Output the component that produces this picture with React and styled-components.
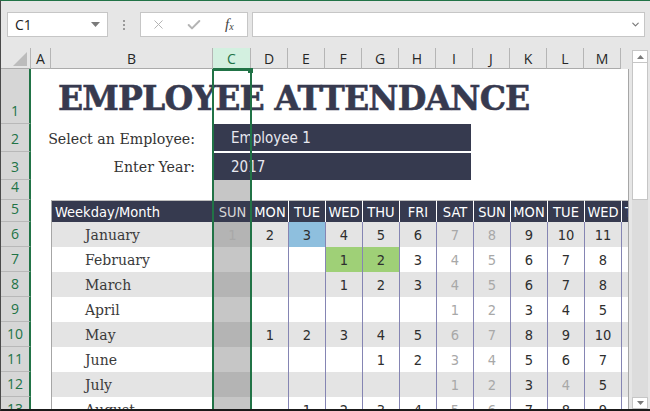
import React from "react";
import styled, { createGlobalStyle } from "styled-components";
import { X, Check, ChevronDown } from "lucide-react";

const GlobalStyle = createGlobalStyle`
  html, body { margin: 0; padding: 0; background: #fff; }
  * { box-sizing: border-box; }
`;

const NAVY = "#363a4f";
const STRIPE = "#e4e4e4";
const LINE = "#8585b3";
const GREEN = "#217346";
const UI = `"Open Sans", "Liberation Sans", sans-serif`;
const SANS = `"DejaVu Sans Condensed", "Liberation Sans", sans-serif`;
const SERIF = `"DejaVu Serif", "Liberation Serif", serif`;

const Window = styled.div`
  width: 650px;
  height: 411px;
  background: #e6e6e6;
  border-top: 1px solid ${GREEN};
  border-left: 1px solid #4a4a4a;
  border-bottom: 2px solid #1a1a1a;
  display: flex;
  flex-direction: column;
  overflow: hidden;
  font-family: ${UI};
`;

/* formula bar */
const FormulaBar = styled.div`
  height: 47px;
  flex-shrink: 0;
  display: flex;
  align-items: flex-start;
  padding: 11px 5px 0 6px;
`;

const Box = styled.div`
  height: 25px;
  background: #fff;
  border: 1px solid #c6c6c6;
  display: flex;
  align-items: center;
`;

const NameBox = styled(Box)`
  width: 101px;
  justify-content: space-between;
  padding: 0 7px 0 7px;
  font-size: 14px;
  color: #222;
`;

const Dots = styled.div`
  width: 32px;
  height: 25px;
  display: flex;
  flex-direction: column;
  align-items: center;
  justify-content: center;
  gap: 2px;
  & span {
    width: 2px;
    height: 2px;
    background: #9a9a9a;
  }
`;

const ButtonBox = styled(Box)`
  width: 108px;
`;

const Slot = styled.div`
  width: 36px;
  display: flex;
  justify-content: center;
  align-items: center;
  color: #b4b4b4;
`;

const Fx = styled.span`
  font-family: "Liberation Serif", serif;
  font-style: italic;
  font-size: 15px;
  color: #444;
  & sub {
    font-size: 10px;
    vertical-align: baseline;
    position: relative;
    top: 1px;
  }
`;

const FormulaInput = styled(Box)`
  flex: 1;
  margin-left: 4px;
  justify-content: flex-end;
  padding-right: 3px;
  color: #777;
`;

/* sheet */
const SheetArea = styled.div`
  flex: 1;
  min-height: 0;
  display: flex;
`;

const Grid = styled.div`
  width: 628px;
  position: relative;
  display: flex;
  flex-direction: column;
  overflow: hidden;
`;

const HeaderRow = styled.div`
  height: 21px;
  flex-shrink: 0;
  display: flex;
`;

const Corner = styled.div`
  width: 30px;
  flex-shrink: 0;
  position: relative;
  border-right: 1px solid #b5b5b5;
  border-bottom: 1px solid #ababab;
  & svg {
    position: absolute;
    right: 3px;
    bottom: 2px;
  }
`;

const ColHead = styled.div`
  width: ${p => p.$w}px;
  flex-shrink: 0;
  display: flex;
  align-items: center;
  justify-content: center;
  font-size: 14px;
  color: ${p => (p.$sel ? GREEN : "#262626")};
  background: ${p => (p.$sel ? "#d3f0e0" : "transparent")};
  border-right: 1px solid #b5b5b5;
  border-bottom: 1px solid ${p => (p.$sel ? GREEN : "#ababab")};
`;

const Body = styled.div`
  flex: 1;
  background: #fff;
  border-right: 1px solid #a6a6a6;
`;

const Row = styled.div`
  height: ${p => p.$h}px;
  display: flex;
`;

const RowHead = styled.div`
  width: 30px;
  flex-shrink: 0;
  background: #d6d6d6;
  color: ${GREEN};
  border-right: 2px solid ${GREEN};
  border-bottom: 1px solid #b8b8b8;
  display: flex;
  align-items: flex-end;
  justify-content: center;
  font-size: 14px;
  line-height: 20px;
  padding-bottom: 2px;
`;

const Cell = styled.div`
  flex: 0 0 ${p => p.$w}px;
  width: ${p => p.$w}px;
  height: 100%;
  display: flex;
  align-items: center;
  justify-content: ${p => p.$align || "center"};
  background: ${p => p.$bg || "#fff"};
  overflow: hidden;
  white-space: nowrap;
`;

const Filler = styled.div`
  flex: 1;
  height: 100%;
  background: ${p => p.$bg || "#fff"};
`;

const TitleCell = styled.div`
  flex: 1;
  display: flex;
  align-items: flex-end;
  padding: 0 0 8px 7px;
  font-family: ${SERIF};
  font-weight: bold;
  font-size: 33px;
  line-height: 34px;
  letter-spacing: -0.8px;
  color: #373a4f;
  -webkit-text-stroke: 0.6px #373a4f;
  white-space: nowrap;
`;

const LabelCell = styled(Cell)`
  align-items: flex-end;
  justify-content: flex-end;
  overflow: visible;
  padding: 0 18px 3px 0;
  font-family: ${SERIF};
  font-size: 14.2px;
  line-height: 20px;
  color: #333;
`;

const InputCell = styled(Cell)`
  padding: ${p => (p.$first ? "0 2px 1px 0" : "1px 2px 0 0")};
  align-items: stretch;
`;

const InputBox = styled.div`
  flex: 1;
  background: ${NAVY};
  color: #e8e8f0;
  display: flex;
  align-items: center;
  padding-left: 18px;
  font-family: ${SANS};
  font-size: 15px;
`;

const HeadCell = styled(Cell)`
  background: ${NAVY};
  color: ${p => (p.$sel ? "#d6d6d6" : "#fff")};
  border-top: 1px solid #bfbfbf;
  border-left: 1px solid ${p => p.$edge || "#fff"};
  font-family: ${SANS};
  font-size: 14.5px;
  padding: ${p => (p.$left ? "0 0 0 3px" : "0")};
`;

const MonthCell = styled(Cell)`
  border-left: 1px solid #a6a6a6;
  padding-left: 33px;
  font-family: ${SERIF};
  font-size: 14px;
  color: #3a3a3a;
`;

const DayCell = styled(Cell)`
  font-family: ${SANS};
  font-size: 14.5px;
  color: ${p => (p.$muted ? "#a8a8a8" : "#2e2e2e")};
  border-left: 1px solid ${p => p.$line || "transparent"};
`;

const Selection = styled.div`
  position: absolute;
  left: 211px;
  top: 21px;
  width: 40px;
  bottom: -4px;
  border: 2px solid ${GREEN};
  pointer-events: none;
`;

const FillHandle = styled.div`
  position: absolute;
  left: 247px;
  top: 20px;
  width: 5px;
  height: 5px;
  background: ${GREEN};
`;

/* scrollbar */
const Scrollbar = styled.div`
  width: 16px;
  margin: 2px 0 0 3px;
  display: flex;
  flex-direction: column;
  background: #dcdcdc;
`;

const ScrollBtn = styled.div`
  height: ${p => p.$h}px;
  flex-shrink: 0;
  background: #fff;
  border: 1px solid #c6c6c6;
  display: flex;
  align-items: center;
  justify-content: center;
`;

const Thumb = styled.div`
  height: 138px;
  flex-shrink: 0;
  margin-top: -1px;
  background: #fff;
  border: 1px solid #c6c6c6;
`;

const Track = styled.div`
  flex: 1;
`;

const COLS = [
  ["A", 20],
  ["B", 162],
  ["C", 38],
  ["D", 37],
  ["E", 37],
  ["F", 37],
  ["G", 37],
  ["H", 37],
  ["I", 37],
  ["J", 37],
  ["K", 37],
  ["L", 37],
  ["M", 37],
];

const DAYS = ["SUN", "MON", "TUE", "WED", "THU", "FRI", "SAT", "SUN", "MON", "TUE", "WED"];
const WEEKEND = [0, 6, 7];
const dayW = i => (i === 0 ? 38 : 37);

const MONTHS = [
  { name: "January", days: [1, 2, 3, 4, 5, 6, 7, 8, 9, 10, 11], marks: { 2: "blue" } },
  { name: "February", days: ["", "", "", 1, 2, 3, 4, 5, 6, 7, 8], marks: { 3: "green", 4: "green" } },
  { name: "March", days: ["", "", "", 1, 2, 3, 4, 5, 6, 7, 8] },
  { name: "April", days: ["", "", "", "", "", "", 1, 2, 3, 4, 5] },
  { name: "May", days: ["", 1, 2, 3, 4, 5, 6, 7, 8, 9, 10] },
  { name: "June", days: ["", "", "", "", 1, 2, 3, 4, 5, 6, 7] },
  { name: "July", days: ["", "", "", "", "", "", 1, 2, 3, 4, 5], marks: { 9: "off" } },
  { name: "August", days: ["", "", 1, 2, 3, 4, 5, 6, 7, 8, 9] },
];

function cellBg(stripe, mark, sel) {
  if (mark === "blue") return "#8ebfde";
  if (mark === "green") return "#9fd077";
  if (sel) return stripe ? "#b4b4b4" : "#c6c6c6";
  return stripe ? STRIPE : "#fff";
}

function MonthRow({ num, month, stripe }) {
  const marks = month.marks || {};
  const bg = stripe ? STRIPE : "#fff";
  return (
    <Row $h={25}>
      <RowHead>{num}</RowHead>
      <Cell $w={20} />
      <MonthCell $w={162} $align="flex-start" $bg={bg}>{month.name}</MonthCell>
      {month.days.map((d, i) => (
        <DayCell
          key={i}
          $w={dayW(i)}
          $bg={cellBg(stripe, marks[i], i === 0)}
          $line={i === 0 ? null : LINE}
          $muted={WEEKEND.includes(i) || marks[i] === "off"}
        >
          {d}
        </DayCell>
      ))}
      <DayCell $w={7} $bg={bg} $line={LINE} />
    </Row>
  );
}

export default function App() {
  return (
    <>
      <GlobalStyle />
      <Window>
        <FormulaBar>
          <NameBox>
            <span>C1</span>
            <svg width="9" height="5" viewBox="0 0 9 5">
              <path d="M0 0 L9 0 L4.5 5 Z" fill="#7a7a7a" />
            </svg>
          </NameBox>
          <Dots>
            <span />
            <span />
            <span />
          </Dots>
          <ButtonBox>
            <Slot>
              <X size={15} strokeWidth={1.6} />
            </Slot>
            <Slot>
              <Check size={16} strokeWidth={3} />
            </Slot>
            <Slot>
              <Fx>
                f<sub>x</sub>
              </Fx>
            </Slot>
          </ButtonBox>
          <FormulaInput>
            <ChevronDown size={11} strokeWidth={2.5} />
          </FormulaInput>
        </FormulaBar>

        <SheetArea>
          <Grid>
            <HeaderRow>
              <Corner>
                <svg width="14" height="14" viewBox="0 0 14 14">
                  <path d="M14 0 L14 14 L0 14 Z" fill="#bcbcbc" />
                </svg>
              </Corner>
              {COLS.map(([l, w]) => (
                <ColHead key={l} $w={w} $sel={l === "C"}>
                  {l}
                </ColHead>
              ))}
            </HeaderRow>

            <Body>
              <Row $h={55}>
                <RowHead>1</RowHead>
                <Cell $w={20} />
                <TitleCell>EMPLOYEE ATTENDANCE</TitleCell>
              </Row>

              <Row $h={28}>
                <RowHead>2</RowHead>
                <Cell $w={20} />
                <LabelCell $w={162}>Select an Employee:</LabelCell>
                <InputCell $w={260} $first>
                  <InputBox>Employee 1</InputBox>
                </InputCell>
                <Filler />
              </Row>

              <Row $h={28}>
                <RowHead>3</RowHead>
                <Cell $w={20} />
                <LabelCell $w={162}>Enter Year:</LabelCell>
                <InputCell $w={260}>
                  <InputBox>2017</InputBox>
                </InputCell>
                <Filler />
              </Row>

              <Row $h={20}>
                <RowHead>4</RowHead>
                <Cell $w={20} />
                <Cell $w={162} />
                <Cell $w={38} $bg="#c6c6c6" />
                <Filler />
              </Row>

              <Row $h={22}>
                <RowHead>5</RowHead>
                <Cell $w={20} />
                <HeadCell $w={162} $align="flex-start" $edge="#a6a6a6" $left>
                  Weekday/Month
                </HeadCell>
                {DAYS.map((d, i) => (
                  <HeadCell key={i} $w={dayW(i)} $sel={i === 0}>
                    {d}
                  </HeadCell>
                ))}
                <HeadCell $w={7} $align="flex-start" $left>
                  THU
                </HeadCell>
              </Row>

              {MONTHS.map((m, i) => (
                <MonthRow key={m.name} num={6 + i} month={m} stripe={i % 2 === 0} />
              ))}
            </Body>

            <Selection />
            <FillHandle />
          </Grid>

          <Scrollbar>
            <ScrollBtn $h={13}>
              <svg width="7" height="4" viewBox="0 0 7 4">
                <path d="M0 4 L3.5 0 L7 4 Z" fill="#7a7a7a" />
              </svg>
            </ScrollBtn>
            <Thumb />
            <Track />
            <ScrollBtn $h={12}>
              <svg width="7" height="4" viewBox="0 0 7 4">
                <path d="M0 0 L7 0 L3.5 4 Z" fill="#7a7a7a" />
              </svg>
            </ScrollBtn>
          </Scrollbar>
        </SheetArea>
      </Window>
    </>
  );
}
